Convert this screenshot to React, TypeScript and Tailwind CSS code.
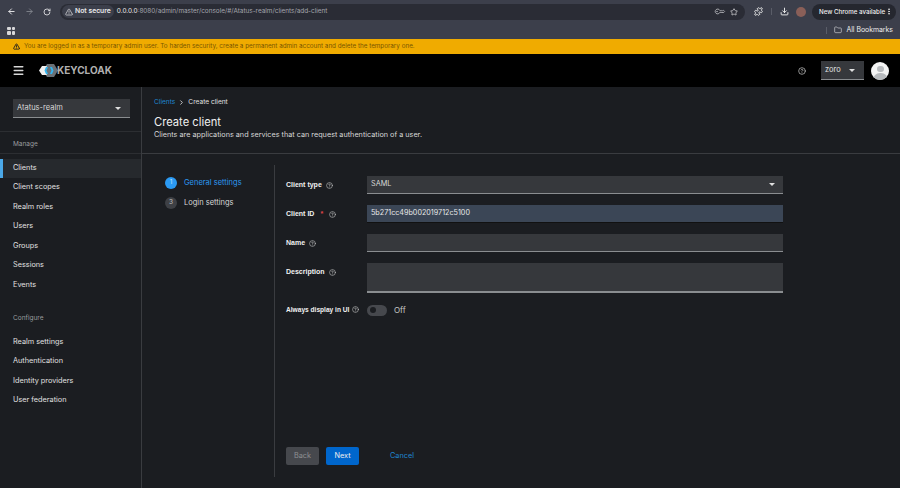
import React from "react";
import { ArrowLeft, ArrowRight, RotateCw, TriangleAlert, Star, Download, EllipsisVertical, Folder, Puzzle, KeyRound, CircleHelp, ChevronRight, Menu } from "lucide-react";

function Help({ className = "" }: { className?: string }) {
  return <CircleHelp size={7} strokeWidth={2} className={"text-[#c7c7c7] shrink-0 " + className} />;
}

function Caret({ className = "" }: { className?: string }) {
  return <span className={"inline-block w-0 h-0 border-l-[3px] border-r-[3px] border-t-[3px] border-l-transparent border-r-transparent border-t-[#e0e0e0] " + className} />;
}

function Logo() {
  return (
    <svg width="20" height="13" viewBox="0 0 20 13" className="shrink-0">
      <polygon points="8,0 15,0 19,6.5 15,13 8,13 4,6.5" fill="#6b7075" />
      <polygon points="0,6.5 3,2 8,2 6,6.5 8,11 3,11" fill="#f0f0f0" />
      <polygon points="7,3 9,3 7.5,6.5 9,10 7,10 5.5,6.5" fill="#33b5f0" />
      <polygon points="11,3 13,3 14.5,6.5 13,10 11,10 12.5,6.5" fill="#33b5f0" />
    </svg>
  );
}

const manage = ["Clients", "Client scopes", "Realm roles", "Users", "Groups", "Sessions", "Events"];
const configure = ["Realm settings", "Authentication", "Identity providers", "User federation"];

function NavItem({ label, active }: { label: string; active?: boolean }) {
  return (
    <div className={"h-[19.5px] flex items-center text-[7.3px] text-[#e0e0e0] " + (active ? "bg-[#26292d] border-l-[3px] border-[#4ba8e8] pl-[10px]" : "pl-[13px]")}>
      {label}
    </div>
  );
}

function Field({ label, required, children, h = "h-[18px]", mb = "mb-[11px]" }: { label: string; required?: boolean; children: React.ReactNode; h?: string; mb?: string }) {
  return (
    <div className={"flex " + mb}>
      <div className="w-[81px] flex items-start pt-[4px] gap-[4px] text-[7px] font-bold font-['Liberation_Sans',sans-serif] text-[#f0f0f0] leading-[10px] whitespace-nowrap">
        <span>{label}</span>
        {required && <span className="text-[#e0454a] mx-[2px]">*</span>}
        <Help className="mt-[2px]" />
      </div>
      <div className={"w-[416px] " + h}>{children}</div>
    </div>
  );
}

export default function App() {
  return (
    <div className="w-[900px] h-[488px] overflow-hidden flex flex-col bg-[#1b1d21] text-[#e0e0e0] font-['Inter',sans-serif]">
      {/* Browser toolbar */}
      <div className="h-[39px] shrink-0 bg-[#3c3f4b] flex flex-col">
        <div className="h-[22px] flex items-center pl-[7px] pr-[3px] pt-[1px]">
          <ArrowLeft size={9} strokeWidth={2.5} className="text-[#e8e8ea]" />
          <ArrowRight size={9} strokeWidth={2.5} className="text-[#80838c] ml-[9px]" />
          <RotateCw size={8} strokeWidth={2.5} className="text-[#e8e8ea] ml-[9px]" />
          <div className="ml-[9px] h-[16px] w-[685px] rounded-full bg-[#2a2c35] flex items-center pl-[2px] pr-[7px] shrink-0">
            <div className="h-[13px] flex items-center gap-[2px] rounded-full bg-[#3c3f4b] pl-[3px] pr-[3px] text-[6.8px] font-semibold text-[#e8e8ea] whitespace-nowrap">
              <TriangleAlert size={8} strokeWidth={2} />
              Not secure
            </div>
            <span className="ml-[3px] text-[6.4px] text-[#f0f0f0]">0.0.0.0</span>
            <span className="text-[6.4px] text-[#a4a6ad]">:8080/admin/master/console/#/Atatus-realm/clients/add-client</span>
            <div className="ml-auto flex items-center gap-[6px]">
              <KeyRound size={9} className="text-[#c5c6ca] rotate-[-135deg]" />
              <Star size={8} className="text-[#e8e8ea]" />
            </div>
          </div>
          <Puzzle size={9} strokeWidth={2.5} className="text-[#eeeeee] ml-[9px]" />
          <div className="w-px h-[7px] bg-[#5a5d68] ml-[8px]" />
          <Download size={9} strokeWidth={2.5} className="text-[#eeeeee] ml-[8px]" />
          <div className="w-[10px] h-[10px] rounded-full bg-[#8a5f58] ml-[7px]" />
          <div className="ml-[6px] h-[16px] w-[84px] rounded-full bg-[#25272f] flex items-center justify-between pl-[7px] pr-[3px] text-[6.2px] font-medium text-[#f0f0f0] whitespace-nowrap">
            New Chrome available
            <EllipsisVertical size={9} strokeWidth={2.5} />
          </div>
        </div>
        <div className="h-[17px] flex items-center pl-[7px] pr-[7px]">
          <div className="w-[8px] h-[8px] grid grid-cols-2 gap-[1px]">
            <span className="bg-[#d8d8da] rounded-[1px]" />
            <span className="bg-[#d8d8da] rounded-[1px]" />
            <span className="bg-[#d8d8da] rounded-[1px]" />
            <span className="bg-[#d8d8da] rounded-[1px]" />
          </div>
          <div className="ml-auto flex items-center text-[6.9px] text-[#eeeeee]">
            <div className="w-px h-[7px] bg-[#5a5d68] mr-[7px]" />
            <Folder size={8} className="text-[#d0d0d4] mr-[4px]" />
            All Bookmarks
          </div>
        </div>
      </div>

      {/* Warning banner */}
      <div className="h-[15px] shrink-0 bg-[#f0ab00] flex items-center pl-[13px] gap-[4px] text-[6.3px] text-[#795600] whitespace-nowrap">
        <TriangleAlert size={7} strokeWidth={3} className="text-[#1b1d21]" />
        You are logged in as a temporary admin user. To harden security, create a permanent admin account and delete the temporary one.
      </div>

      {/* Header */}
      <div className="h-[33px] shrink-0 bg-black flex items-center">
        <Menu size={13} strokeWidth={2.5} className="text-[#d8d8d8] ml-[12px]" />
        <div className="ml-[14px] flex items-center">
          <Logo />
          <span className="ml-[-2px] text-[10px] font-bold text-[#b0b0b0]">KEYCLOAK</span>
        </div>
        <div className="ml-auto flex items-center pr-[11px]">
          <CircleHelp size={8} strokeWidth={2} className="text-[#d0d0d0]" />
          <div className="ml-[15px] w-[43px] h-[19px] bg-[#36383c] border-b border-[#8a8d90] flex items-center justify-between pl-[4px] pr-[9px] text-[7.5px] text-[#e0e0e0]">
            zoro
            <Caret />
          </div>
          <div className="ml-[7px] w-[18px] h-[18px] rounded-full bg-[#f4f4f4] overflow-hidden flex flex-col items-center">
            <div className="mt-[4px] w-[7px] h-[7px] rounded-full bg-[#b8bbbe]" />
            <div className="mt-[1px] w-[15px] h-[8px] rounded-t-full bg-[#b8bbbe]" />
          </div>
        </div>
      </div>

      <div className="flex-1 flex min-h-0">
        {/* Sidebar */}
        <aside className="w-[142px] shrink-0 bg-[#1b1d21] border-r border-[#3a3c40] flex flex-col">
          <div className="h-[45px] flex items-center pl-[13px] border-b border-[#2c2e32]">
            <div className="w-[117px] h-[19px] bg-[#36383c] border-b border-[#8a8d90] flex items-center justify-between pl-[4px] pr-[9px] text-[7.5px] text-[#d8d8d8] mt-[-1px]">
              Atatus-realm
              <Caret />
            </div>
          </div>
          <div className="h-[22px] flex items-center pl-[13px] pt-[5px] text-[6.5px] text-[#9a9c9f] border-b border-[#2c2e32]">Manage</div>
          <div className="pt-[4.5px]">
            {manage.map((m, i) => (
              <NavItem key={m} label={m} active={i === 0} />
            ))}
          </div>
          <div className="mt-[14.5px] h-[18px] flex items-center pl-[13px] text-[6.5px] text-[#9a9c9f]">Configure</div>
          <div className="mt-[5px]">
            {configure.map((m) => (
              <NavItem key={m} label={m} />
            ))}
          </div>
        </aside>

        {/* Main */}
        <main className="flex-1 flex flex-col min-w-0">
          <div className="h-[67px] shrink-0 border-b border-[#3a3c40] pl-[12px] pt-[10px]">
            <div className="flex items-center h-[11px] text-[6.6px]">
              <span className="text-[#1f86d0]">Clients</span>
              <ChevronRight size={7} strokeWidth={3} className="text-[#d8d8d8] mx-[3px]" />
              <span className="text-[#e0e0e0]">Create client</span>
            </div>
            <div className="mt-[7px] text-[11.2px] leading-[14px] font-normal text-[#f0f0f0]">Create client</div>
            <div className="text-[7.25px] leading-[11px] text-[#d8d8d8]">Clients are applications and services that can request authentication of a user.</div>
          </div>

          <div className="flex-1 flex pt-[11px] pb-[11px] min-h-0">
            <div className="w-[133px] shrink-0 border-r border-[#3a3c40] pl-[23px] pt-[12px]">
              <div className="flex items-center h-[12px] text-[7.5px] text-[#2b9af3]">
                <span className="w-[12px] h-[12px] rounded-full bg-[#2b9af3] text-[#bfe0fa] text-[6.5px] flex items-center justify-center mr-[7px]">1</span>
                General settings
              </div>
              <div className="flex items-center h-[12px] mt-[8px] text-[7.5px] text-[#d8d8d8]">
                <span className="w-[12px] h-[12px] rounded-full bg-[#3e4045] text-[#c0c0c0] text-[6.5px] flex items-center justify-center mr-[7px]">3</span>
                Login settings
              </div>
            </div>

            <div className="flex-1 pl-[11px] pt-[11px] flex flex-col">
              <Field label="Client type">
                <div className="h-full bg-[#36383c] border-b border-[#8a8d90] flex items-center justify-between pl-[4px] pr-[8px] text-[7.3px] text-[#d8d8d8]">
                  SAML
                  <Caret />
                </div>
              </Field>
              <Field label="Client ID" required>
                <div className="h-full bg-[#3b4656] border-b border-[#111] flex items-center pl-[4px] text-[7.2px] text-[#e8e8e8]">5b271cc49b002019712c5100</div>
              </Field>
              <Field label="Name">
                <div className="h-full bg-[#36383c] border-b border-[#8a8d90]" />
              </Field>
              <Field label="Description" h="h-[30px]" mb="mb-[11px]">
                <div className="h-full bg-[#36383c] border-b-2 border-[#8a8d90]" />
              </Field>
              <div className="flex items-center h-[12px]">
                <div className="w-[81px] flex items-center gap-[3px] text-[6.6px] font-bold font-['Liberation_Sans',sans-serif] text-[#f0f0f0] whitespace-nowrap">
                  Always display in UI
                  <Help />
                </div>
                <div className="w-[20px] h-[11px] rounded-full bg-[#46484d] flex items-center pl-[3px]">
                  <span className="w-[6px] h-[6px] rounded-full bg-[#1b1d21]" />
                </div>
                <span className="ml-[7px] text-[8px] text-[#c8c8c8]">Off</span>
              </div>

              <div className="mt-auto flex items-center text-[7.3px] mb-[12px]">
                <div className="w-[33px] h-[18px] rounded-[2px] bg-[#46484d] text-[#8e9093] flex items-center justify-center">Back</div>
                <div className="ml-[7px] w-[33px] h-[18px] rounded-[2px] bg-[#0066cc] text-[#f0f0f0] flex items-center justify-center">Next</div>
                <span className="ml-[31px] text-[#1f86d0]">Cancel</span>
              </div>
            </div>
          </div>
        </main>
      </div>
    </div>
  );
}
